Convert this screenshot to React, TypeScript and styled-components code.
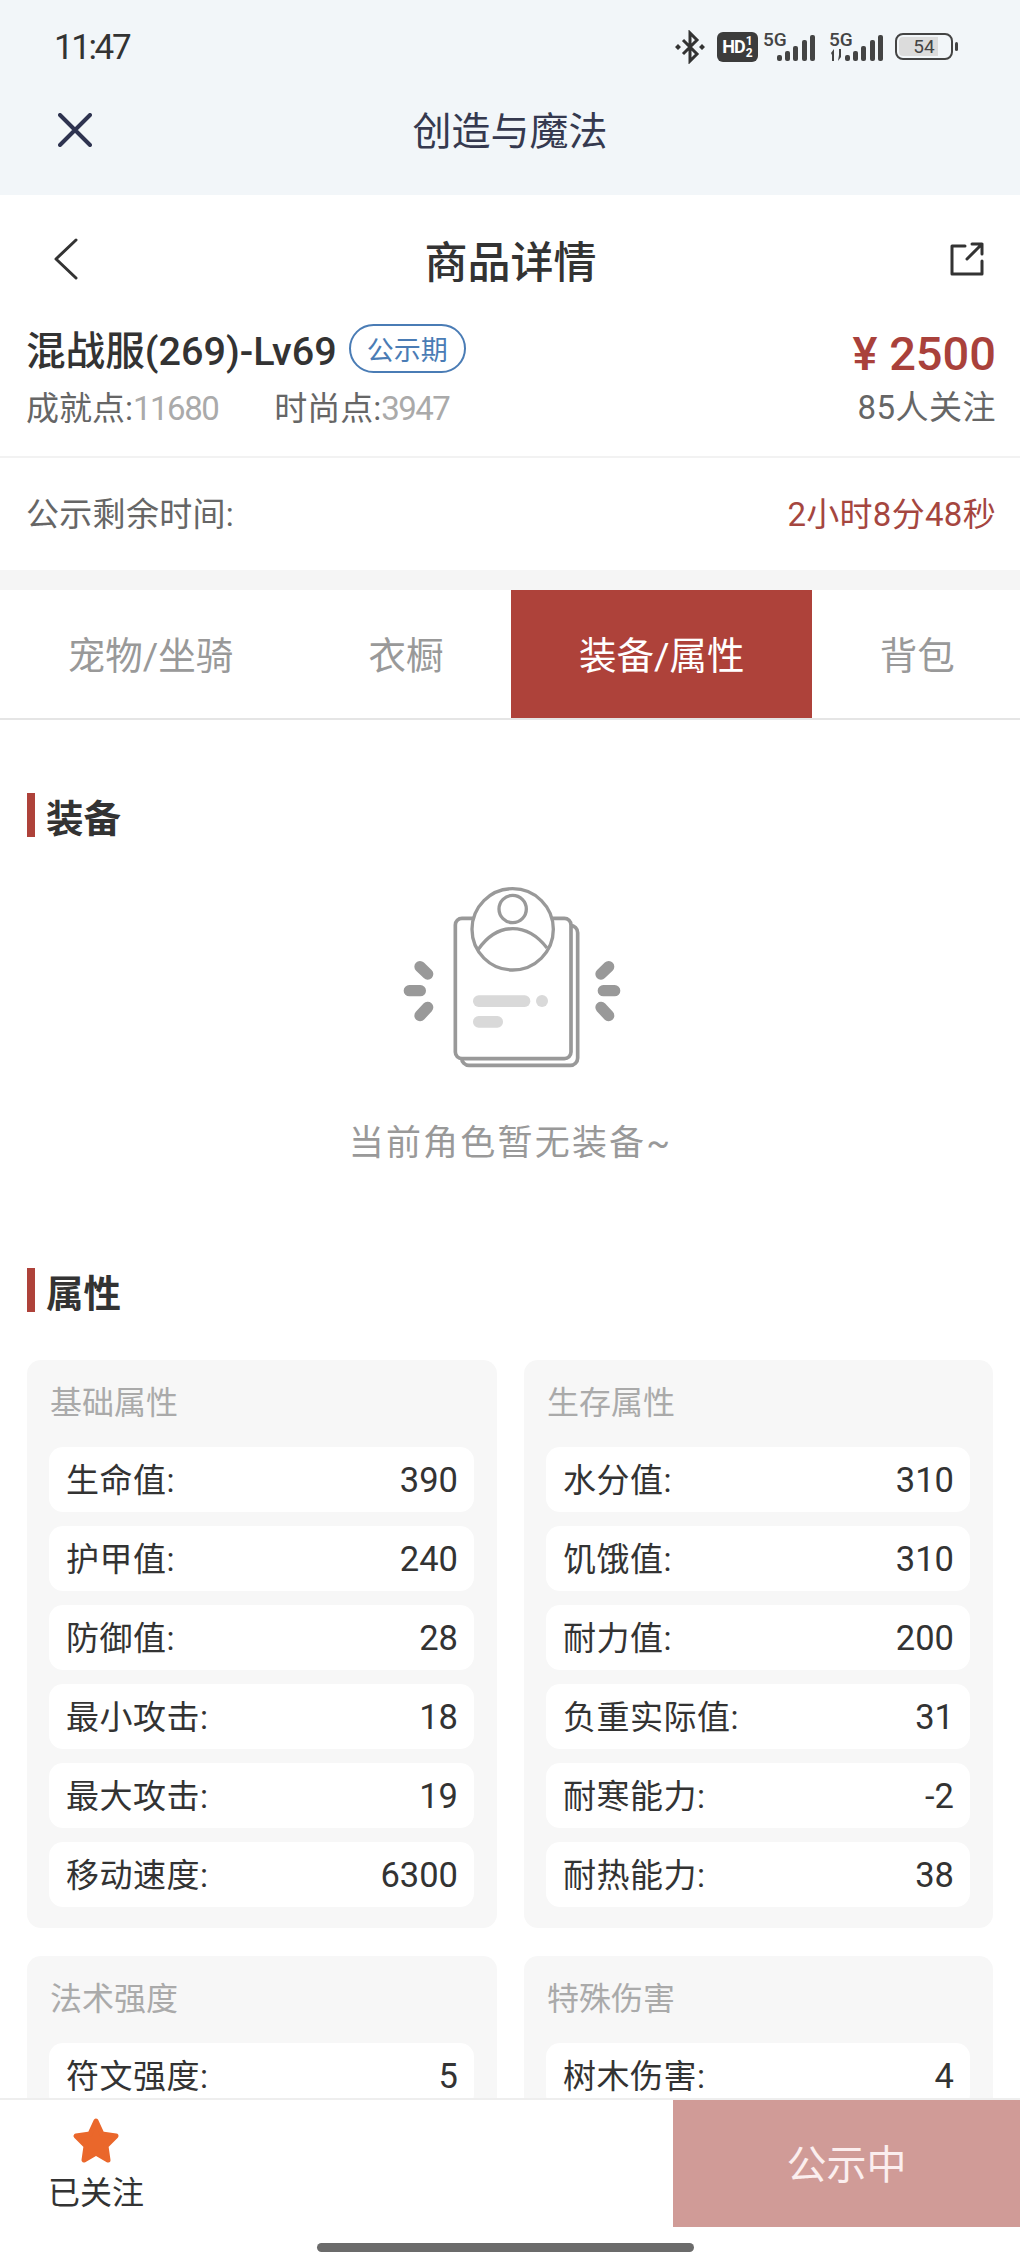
import React from 'react'
import styled, { createGlobalStyle } from 'styled-components'

const red = '#ae423a'
const stack = `Roboto, "Noto Sans CJK SC", sans-serif`

const GlobalStyle = createGlobalStyle`
  html, body {
    margin: 0;
    padding: 0;
    background: #fff;
  }
  body {
    font-family: ${stack};
  }
`

const Page = styled.div`
  position: relative;
  width: 1020px;
  height: 2267px;
  overflow: hidden;
  background: #fff;
  color: #333;
`

const TopArea = styled.div`
  height: 195px;
  background: #f2f6f9;
`

const StatusBar = styled.div`
  height: 93px;
  box-sizing: border-box;
  padding: 0 62px 0 54px;
  display: flex;
  align-items: center;
  justify-content: space-between;
`

const Clock = styled.span`
  padding-top: 2px;
  font-size: 35px;
  line-height: 1;
  color: #333;
  letter-spacing: -2.4px;
`

const StatusIcons = styled.div`
  display: flex;
  align-items: center;
`

const HdBadge = styled.div`
  width: 41px;
  height: 30px;
  margin-left: 12px;
  border-radius: 6px;
  background: #3c3c3c;
  color: #fff;
  display: flex;
  align-items: center;
  justify-content: center;
  font-size: 18px;
  font-weight: 700;
  letter-spacing: -1px;
`

const Fraction = styled.span`
  margin-left: 1px;
  display: flex;
  flex-direction: column;
  font-size: 12px;
  line-height: 12px;
  letter-spacing: 0;
`

const Signal = styled.div<{ $gap: number }>`
  margin-left: ${p => p.$gap}px;
  display: flex;
  align-items: flex-end;
  height: 30px;
`

const SignalLabel = styled.span<{ $width: number }>`
  align-self: flex-start;
  width: ${p => p.$width}px;
  font-size: 19px;
  line-height: 16px;
  font-weight: 500;
  color: #444;
`

const Battery = styled.div`
  margin-left: 12px;
  width: 58px;
  height: 27px;
  box-sizing: border-box;
  border: 2.5px solid #444;
  border-radius: 8px;
  padding: 2px;
  display: flex;
`

const BatteryLevel = styled.div`
  flex: 1;
  border-radius: 4px;
  background: linear-gradient(90deg, #dcdcdc 78%, transparent 78%);
  display: flex;
  align-items: center;
  justify-content: center;
  font-size: 19px;
  color: #444;
`

const BatteryTip = styled.div`
  width: 3px;
  height: 9px;
  margin-left: 2px;
  border-radius: 2px;
  background: #444;
`

const WebBar = styled.div`
  height: 74px;
  padding-left: 58px;
  display: grid;
  grid-template-columns: 34px 1fr 92px;
  align-items: center;
`

const WebTitle = styled.div`
  padding-bottom: 4px;
  text-align: center;
  font-size: 39px;
  color: #35394f;
`

const IconBox = styled.svg`
  display: block;
`

const DetailBar = styled.div`
  height: 128px;
  padding: 0 36px 0 54px;
  display: grid;
  grid-template-columns: 34px 1fr 34px;
  align-items: center;
`

const DetailTitle = styled.div`
  text-align: center;
  padding-right: 17px;
  font-size: 43px;
  font-weight: 500;
  color: #333;
`

const Summary = styled.div`
  height: 135px;
  box-sizing: border-box;
  padding: 0 24px 0 26px;
  display: flex;
  justify-content: space-between;
  border-bottom: 2px solid #f2f2f2;
`

const SummaryLeft = styled.div`
  display: flex;
  flex-direction: column;
`

const NameRow = styled.div`
  display: flex;
  align-items: center;
  height: 48px;
`

const Name = styled.span`
  font-size: 39.6px;
  font-weight: 500;
  color: #333;
`

const Badge = styled.span`
  margin: 3px 0 0 12px;
  width: 117px;
  height: 49px;
  box-sizing: border-box;
  border: 2px solid #4a7cb5;
  border-radius: 25px;
  display: flex;
  align-items: center;
  justify-content: center;
  font-size: 27px;
  color: #4a7cb5;
`

const Points = styled.div`
  margin-top: 13px;
  display: flex;
  gap: 56px;
  font-size: 33px;
  line-height: 50px;
  color: #666;
`

const PointValue = styled.span`
  color: #aaa;
  letter-spacing: -1.5px;
`

const SummaryRight = styled.div`
  display: flex;
  flex-direction: column;
  align-items: flex-end;
`

const Price = styled.span`
  margin-top: 7px;
  font-size: 47px;
  line-height: 48px;
  font-weight: 500;
  color: #a9413b;
`

const Watchers = styled.span`
  margin-top: 5px;
  font-size: 33px;
  line-height: 50px;
  letter-spacing: 0.5px;
  color: #666;
`

const TimeRow = styled.div`
  height: 112px;
  box-sizing: border-box;
  padding: 0 24px 4px 26px;
  display: flex;
  align-items: center;
  justify-content: space-between;
  font-size: 33px;
  letter-spacing: 0.3px;
  color: #666;
`

const TimeValue = styled.span`
  color: #a5463f;
`

const Band = styled.div`
  height: 20px;
  background: #f5f5f5;
`

const Tabs = styled.div`
  height: 128px;
  display: flex;
  border-bottom: 2px solid #e5e5e5;
`

const Tab = styled.div<{ $active?: boolean }>`
  flex: none;
  padding: 0 67.7px 4px;
  display: flex;
  align-items: center;
  font-size: 37.5px;
  color: ${p => (p.$active ? '#fff' : '#999')};
  background: ${p => (p.$active ? red : 'transparent')};
`

const Body = styled.div`
  padding: 0 26px 0 27px;
`

const Heading = styled.div<{ $top: number }>`
  margin-top: ${p => p.$top}px;
  height: 44px;
  display: flex;
  align-items: center;
  gap: 11px;
  font-size: 37.5px;
  font-weight: 700;
  color: #333;
  &::before {
    content: '';
    width: 8px;
    height: 44px;
    background: ${red};
  }
`

const Empty = styled.div`
  margin-top: 25px;
  display: flex;
  flex-direction: column;
  align-items: center;
`

const EmptyText = styled.div`
  margin-top: 27px;
  font-size: 35px;
  line-height: 50px;
  letter-spacing: 2.2px;
  color: #999;
`

const CardGrid = styled.div`
  margin-top: 48px;
  display: grid;
  grid-template-columns: 470px 469px;
  gap: 28px 27px;
`

const Card = styled.div`
  padding: 18px 23px 21px 22px;
  border-radius: 14px;
  background: #f7f7f7;
`

const CardTitle = styled.div`
  height: 50px;
  margin-bottom: 19px;
  font-size: 32px;
  line-height: 50px;
  color: #aaa;
  padding-left: 1px;
`

const Rows = styled.div`
  display: flex;
  flex-direction: column;
  gap: 14px;
`

const Row = styled.div`
  height: 65px;
  padding: 0 16px 0 17px;
  border-radius: 14px;
  background: #fff;
  display: flex;
  align-items: center;
  justify-content: space-between;
  font-size: 33px;
  color: #333;
`

const RowLabel = styled.span`
  margin-bottom: 3px;
  letter-spacing: 0.5px;
`

const RowValue = styled.span`
  font-size: 34.5px;
`

const BottomBar = styled.div`
  position: absolute;
  left: 0;
  right: 0;
  bottom: 0;
  height: 169px;
  box-sizing: border-box;
  border-top: 2px solid #eee;
  background: #fff;
  display: flex;
  align-items: flex-start;
  justify-content: space-between;
`

const Follow = styled.div`
  margin-left: 49px;
  padding-top: 17px;
  width: 94px;
  display: flex;
  flex-direction: column;
  align-items: center;
  gap: 4px;
`

const FollowLabel = styled.span`
  font-size: 32px;
  line-height: 50px;
  color: #333;
  white-space: nowrap;
`

const StateButton = styled.div`
  width: 347px;
  height: 127px;
  padding-bottom: 3px;
  box-sizing: border-box;
  background: #d09b97;
  color: #fbeeee;
  display: flex;
  align-items: center;
  justify-content: center;
  font-size: 40px;
`

const HomeIndicator = styled.div`
  position: absolute;
  left: 317px;
  bottom: 15px;
  width: 377px;
  height: 9px;
  border-radius: 5px;
  background: #6b6b6b;
`

const cards = [
  {
    title: '基础属性',
    rows: [
      ['生命值', '390'],
      ['护甲值', '240'],
      ['防御值', '28'],
      ['最小攻击', '18'],
      ['最大攻击', '19'],
      ['移动速度', '6300'],
    ],
  },
  {
    title: '生存属性',
    rows: [
      ['水分值', '310'],
      ['饥饿值', '310'],
      ['耐力值', '200'],
      ['负重实际值', '31'],
      ['耐寒能力', '-2'],
      ['耐热能力', '38'],
    ],
  },
  { title: '法术强度', rows: [['符文强度', '5']] },
  { title: '特殊伤害', rows: [['树木伤害', '4']] },
]

const tabs = ['宠物/坐骑', '衣橱', '装备/属性', '背包']

const Bluetooth = () => (
  <IconBox width="30" height="34" viewBox="0 0 30 34" fill="none" stroke="#333" strokeWidth="3">
    <path d="M8 10 L22 24 L15 31 V3 L22 10 L8 24" />
    <path d="M3 14 L6 17 L3 20 L0 17 Z M27 14 L30 17 L27 20 L24 17 Z" fill="#333" stroke="none" />
  </IconBox>
)

const Bars = ({ arrows }: { arrows?: boolean }) => (
  <IconBox width={arrows ? 54 : 38} height="28" viewBox={arrows ? '0 0 54 28' : '0 0 38 28'} fill="#444">
    {arrows && <path d="M2 19 L5 15 V27 H3 V21 Z M9 27 L12 23 V15 H10 V21 Z" />}
    <g transform={arrows ? 'translate(16 0)' : undefined}>
      <rect x="0" y="21" width="5" height="6" rx="2" />
      <rect x="8" y="17" width="5" height="10" rx="2" />
      <rect x="16" y="12" width="5" height="15" rx="2" />
      <rect x="25" y="6" width="5" height="21" rx="2" />
      <rect x="33" y="1" width="5" height="26" rx="2" />
    </g>
  </IconBox>
)

const CloseIcon = () => (
  <IconBox width="34" height="34" viewBox="0 0 34 34" fill="none" stroke="#2e3350" strokeWidth="4" strokeLinecap="round">
    <path d="M2 2 L32 32 M32 2 L2 32" />
  </IconBox>
)

const BackIcon = () => (
  <IconBox width="24" height="42" viewBox="0 0 24 42" fill="none" stroke="#333" strokeWidth="3" strokeLinecap="round" strokeLinejoin="round">
    <path d="M22 2 L2 21 L22 40" />
  </IconBox>
)

const ShareIcon = () => (
  <IconBox width="34" height="34" viewBox="0 0 34 34" fill="none" stroke="#333" strokeWidth="3" strokeLinecap="round" strokeLinejoin="round">
    <path d="M15 4 H2 V32 H32 V19" />
    <path d="M17 17 L32 2 M22 2 H32 V12" />
  </IconBox>
)

const EmptyArt = () => (
  <IconBox width="280" height="230" viewBox="0 0 840 690" fill="none" stroke="#999">
    <rect x="272" y="190" width="348" height="420" rx="22" strokeWidth="11" fill="#fff" />
    <rect x="253" y="169" width="347" height="421" rx="20" strokeWidth="11" fill="#fff" />
    <circle cx="425" cy="202" r="122" strokeWidth="10" fill="#fff" />
    <circle cx="425" cy="141" r="41" strokeWidth="10" />
    <path d="M322 262 C350 222 385 200 425 200 C465 200 500 222 528 258" strokeWidth="10" />
    <g fill="#d9d9d9" stroke="none">
      <rect x="306" y="400" width="172" height="35" rx="17" />
      <circle cx="513" cy="417" r="18" />
      <rect x="306" y="462" width="90" height="35" rx="17" />
    </g>
    <g strokeWidth="34" strokeLinecap="round">
      <path d="M147 314 L170 336 M115 386 L148 386 M147 461 L170 436" />
      <path d="M690 336 L713 314 M697 386 L731 386 M690 436 L713 461" />
    </g>
  </IconBox>
)

const Star = () => (
  <IconBox width="48" height="47" viewBox="0 0 48 47" fill="#ea672b" stroke="#ea672b" strokeWidth="5" strokeLinejoin="round">
    <path d="M24 4 L30 17 L44 19 L34 29 L36 43 L24 36 L12 43 L14 29 L4 19 L18 17 Z" />
  </IconBox>
)

const App = () => (
  <Page>
    <GlobalStyle />
    <TopArea>
      <StatusBar>
        <Clock>11:47</Clock>
        <StatusIcons>
          <Bluetooth />
          <HdBadge>
            HD
            <Fraction>
              <span>1</span>
              <span>2</span>
            </Fraction>
          </HdBadge>
          <Signal $gap={5}>
            <SignalLabel $width={14}>5G</SignalLabel>
            <Bars />
          </Signal>
          <Signal $gap={14}>
            <SignalLabel $width={0}>5G</SignalLabel>
            <Bars arrows />
          </Signal>
          <Battery>
            <BatteryLevel>54</BatteryLevel>
          </Battery>
          <BatteryTip />
        </StatusIcons>
      </StatusBar>
      <WebBar>
        <CloseIcon />
        <WebTitle>创造与魔法</WebTitle>
      </WebBar>
    </TopArea>
    <DetailBar>
      <BackIcon />
      <DetailTitle>商品详情</DetailTitle>
      <ShareIcon />
    </DetailBar>
    <Summary>
      <SummaryLeft>
        <NameRow>
          <Name>混战服(269)-Lv69</Name>
          <Badge>公示期</Badge>
        </NameRow>
        <Points>
          <span>
            成就点:<PointValue>11680</PointValue>
          </span>
          <span>
            时尚点:<PointValue>3947</PointValue>
          </span>
        </Points>
      </SummaryLeft>
      <SummaryRight>
        <Price>¥ 2500</Price>
        <Watchers>85人关注</Watchers>
      </SummaryRight>
    </Summary>
    <TimeRow>
      <span>公示剩余时间:</span>
      <TimeValue>2小时8分48秒</TimeValue>
    </TimeRow>
    <Band />
    <Tabs>
      {tabs.map(t => (
        <Tab key={t} $active={t === '装备/属性'}>
          {t}
        </Tab>
      ))}
    </Tabs>
    <Body>
      <Heading $top={73}>装备</Heading>
      <Empty>
        <EmptyArt />
        <EmptyText>当前角色暂无装备~</EmptyText>
      </Empty>
      <Heading $top={99}>属性</Heading>
      <CardGrid>
        {cards.map(card => (
          <Card key={card.title}>
            <CardTitle>{card.title}</CardTitle>
            <Rows>
              {card.rows.map(([label, value]) => (
                <Row key={label}>
                  <RowLabel>{label}:</RowLabel>
                  <RowValue>{value}</RowValue>
                </Row>
              ))}
            </Rows>
          </Card>
        ))}
      </CardGrid>
    </Body>
    <BottomBar>
      <Follow>
        <Star />
        <FollowLabel>已关注</FollowLabel>
      </Follow>
      <StateButton>公示中</StateButton>
      <HomeIndicator />
    </BottomBar>
  </Page>
)

export default App
